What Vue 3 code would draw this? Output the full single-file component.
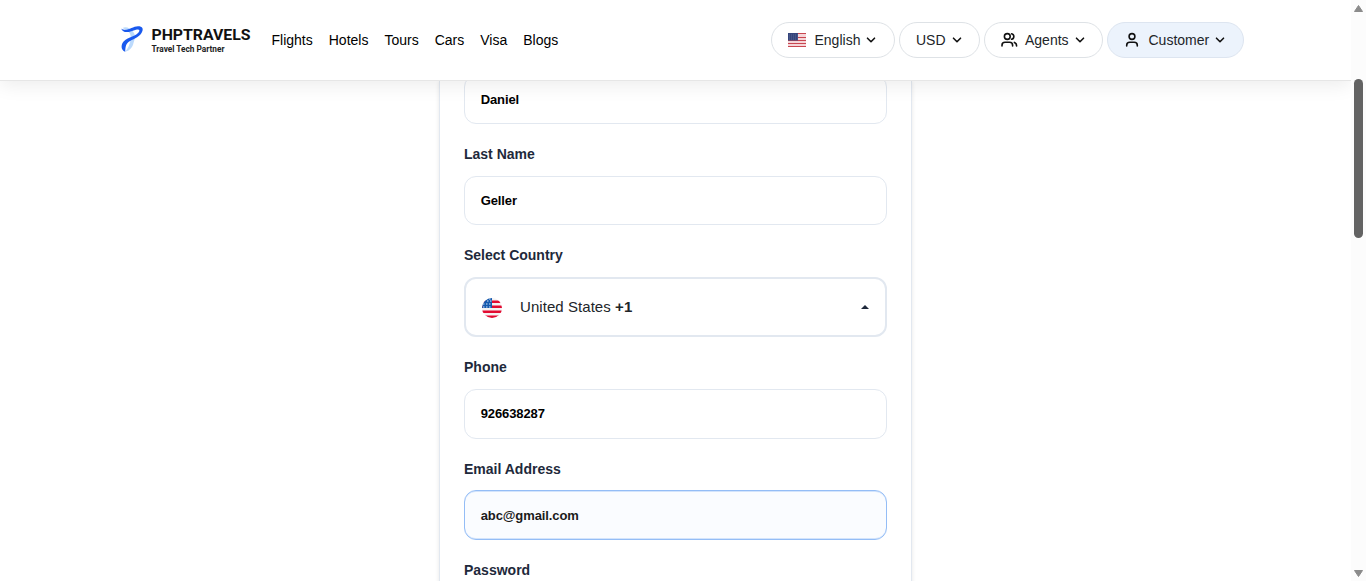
<script setup>
const links = ['Flights', 'Hotels', 'Tours', 'Cars', 'Visa', 'Blogs']
const pills = [
  { label: 'English', icon: 'flag', cls: 'language' },
  { label: 'USD', icon: '', cls: 'currency' },
  { label: 'Agents', icon: 'users', cls: 'agents' },
  { label: 'Customer', icon: 'user', cls: 'customer' }
]
</script>

<template>
  <div class="page">
    <div class="view">
      <header class="header">
        <a class="logo">
          <svg width="132" height="32" viewBox="0 0 132 32">
            <path d="M2.500 5C6 3 10 5 13 8.500C16.500 13 14.500 16.500 13.500 20C12.500 24.500 9.500 28 5 28.700C8.500 25 9.500 21.500 10.500 17C11.500 12 10 8 2.500 5Z" fill="#bcdafc" />
            <path d="M1.200 5.500C6.500 9.500 12 3.500 18 3.300C22.500 3.300 24 6 21.500 10C18.500 15 12.500 16 8.500 19C5.500 21.500 5.500 24.500 5.200 28.800C2 27.500 .5 24 2.500 20C5.500 14.500 14 14.500 18.500 9.500C20.500 7 19 5.800 16 6.700C10.500 8.500 3.500 11.500 1.200 5.500Z" fill="#1959ee" />
            <text x="31.500" y="17" class="brand" textLength="99" lengthAdjust="spacingAndGlyphs">PHPTRAVELS</text>
            <text x="31.500" y="29" class="tagline" textLength="73" lengthAdjust="spacingAndGlyphs">Travel Tech Partner</text>
          </svg>
        </a>
        <nav class="nav">
          <a v-for="l in links" :key="l">{{ l }}</a>
        </nav>
        <div class="pills">
          <button v-for="p in pills" :key="p.label" class="pill" :class="p.cls">
            <svg v-if="p.icon === 'flag'" class="flag" width="18" height="14" viewBox="0 0 18 14">
              <rect width="18" height="14" fill="#f5d5d8" />
              <path d="M0 .5H18M0 4.500H18M0 7.500H18M0 10.500H18M0 13.500H18" stroke="#c84650" />
              <rect width="10" height="7.500" fill="#35457c" />
              <path d="M1 2H10M1 4H10M1 6H10" stroke="#67739d" stroke-width=".7" stroke-dasharray="1 1" />
            </svg>
            <svg v-if="p.icon === 'users'" class="users" width="18" height="16" viewBox="0 0 18 16">
              <g fill="none" stroke="#111" stroke-width="1.600" stroke-linecap="round">
                <circle cx="6.300" cy="4.500" r="2.900" />
                <path d="M1 14V13.200C1 11.500 2.200 10.300 4 10.300H8.600C10.400 10.300 11.600 11.500 11.600 13.200V14M10.600 1.700C13.600 2.300 13.600 6.700 10.600 7.300M13.400 10.400C15 11 15.600 12.200 15.600 14" />
              </g>
            </svg>
            <svg v-if="p.icon === 'user'" class="user" width="16" height="16" viewBox="0 0 16 16">
              <g fill="none" stroke="#111" stroke-width="1.600" stroke-linecap="round">
                <circle cx="8" cy="4.500" r="2.900" />
                <path d="M2.700 14V13.200C2.700 11.500 4 10.300 5.800 10.300H10.200C12 10.300 13.300 11.500 13.300 13.200V14" />
              </g>
            </svg>
            <span>{{ p.label }}</span>
            <svg class="chevron" width="10" height="8" viewBox="0 0 10 8">
              <path d="M1.500 2.200L5 5.700L8.500 2.200" fill="none" stroke="#111" stroke-width="1.600" stroke-linecap="round" stroke-linejoin="round" />
            </svg>
          </button>
        </div>
      </header>

      <main class="main">
        <form class="card">
          <div class="input first">Daniel</div>
          <label>Last Name</label>
          <div class="input">Geller</div>
          <label>Select Country</label>
          <div class="select">
            <svg class="country" width="20" height="20" viewBox="0 0 20 20">
              <defs><clipPath id="round"><circle cx="10" cy="10" r="10" /></clipPath></defs>
              <g clip-path="url(#round)">
                <rect width="20" height="20" fill="#f4f1f2" />
                <path d="M0 3.800H20M0 8.700H20M0 13.800H20M0 18.800H20" stroke="#e20a30" stroke-width="2.500" />
                <rect width="10" height="10" fill="#1459ae" />
                <path d="M1 6H10M1 9H10M5 3H10M7 1H10" stroke="#d6e4f5" stroke-width="1.200" stroke-dasharray="1.500 1.500" />
              </g>
            </svg>
            <span class="name">United States <b>+1</b></span>
            <svg class="caret" width="8" height="4" viewBox="0 0 8 4"><path d="M0 4L4 0L8 4Z" fill="#1e293b" /></svg>
          </div>
          <label>Phone</label>
          <div class="input phone">926638287</div>
          <label>Email Address</label>
          <div class="input email">abc@gmail.com</div>
          <label>Password</label>
        </form>
      </main>
    </div>
    <aside class="scrollbar">
      <svg width="9" height="7" viewBox="0 0 9 7"><path d="M4.500 .5L8.500 6.500H.5Z" fill="#8b8b8b" stroke="#8b8b8b" stroke-linejoin="round" /></svg>
      <div class="thumb"></div>
      <svg class="down" width="9" height="7" viewBox="0 0 9 7"><path d="M4.500 6.500L8.500 .5H.5Z" fill="#8b8b8b" stroke="#8b8b8b" stroke-linejoin="round" /></svg>
    </aside>
  </div>
</template>

<style>
body { overflow: hidden; }
</style>
<style scoped>
* { box-sizing: border-box; }
.page { display: flex; height: 581px; overflow: hidden; background: #fff; font: 14px/20px "Liberation Sans", Arial, sans-serif; }
.view { width: 1351px; height: 581px; display: flex; flex-direction: column; overflow: hidden; }
.header { position: relative; z-index: 1; flex: none; height: 81px; padding: 0 107px 1px 120px; display: flex; align-items: center; background: #fff; border-bottom: 1px solid #e6e6e6; box-shadow: 0 4px 18px rgba(0, 0, 0, .08); }
.logo { display: flex; margin-top: -1px; }
.brand { font: 700 15.500px Roboto, sans-serif; fill: #111; }
.tagline { font: 700 8.300px Roboto, sans-serif; fill: #222; }
.nav { display: flex; gap: 16px; margin-left: 19.500px; color: #000; margin-top: 1px; }
.pills { display: flex; gap: 4px; margin-left: auto; margin-top: 1px; }
.pill { height: 36px; padding: 0 0 0 16px; border: 1px solid #dee2e6; border-radius: 18px; background: #fff; color: #212529; font: inherit; display: flex; align-items: center; }
.language { width: 124px; }
.currency { width: 81px; }
.agents { width: 119px; }
.customer { width: 137px; background: #ecf3fc; border-color: #dde5f0; }
.flag { margin-right: 8.500px; }
.users { margin-right: 6px; }
.user { margin-right: 8.500px; }
.chevron { margin-left: 6px; }
.language .chevron, .customer .chevron { margin-left: 5.500px; }
.main { flex: 1; min-height: 0; display: flex; justify-content: center; }
.card { flex: none; width: 473px; height: 520px; padding: 0 24px; border: 1px solid #e2e8f0; border-top: 0; box-shadow: 0 1px 4px rgba(0, 0, 0, .1); display: flex; flex-direction: column; }
.input { flex: none; height: 49px; padding: 0 15.700px; border: 1px solid #e2e8f0; border-radius: 12px; font-size: 13px; line-height: 47px; font-weight: 700; letter-spacing: -.1px; color: #000; }
.first { margin-top: -6px; }
.phone { height: 50px; }
.email { height: 50px; margin-top: -1px; line-height: 49px; border-color: #94bdf6; box-shadow: inset 0 1px 0 #d3e4fc, inset 0 -1px 0 #d3e4fc; background: #fafcff; color: #1b1b1b; }
label { flex: none; margin: 20px 0 12px; font-weight: 700; color: #1e293b; }
.select { flex: none; height: 60px; padding: 0 16px; border: 2px solid #e2e8f0; border-radius: 12px; display: flex; align-items: center; gap: 18px; font-size: 15px; color: #212529; }
.country { margin-top: 2px; }
.name { letter-spacing: .06px; }
.caret { margin-left: auto; }
.scrollbar { width: 15px; padding: 5px 1px 4px; display: flex; flex-direction: column; align-items: center; background: #fcfcfc; }
.thumb { width: 9px; height: 159px; margin-top: 67px; border-radius: 5px; background: #636363; }
.down { margin-top: auto; }
</style>
